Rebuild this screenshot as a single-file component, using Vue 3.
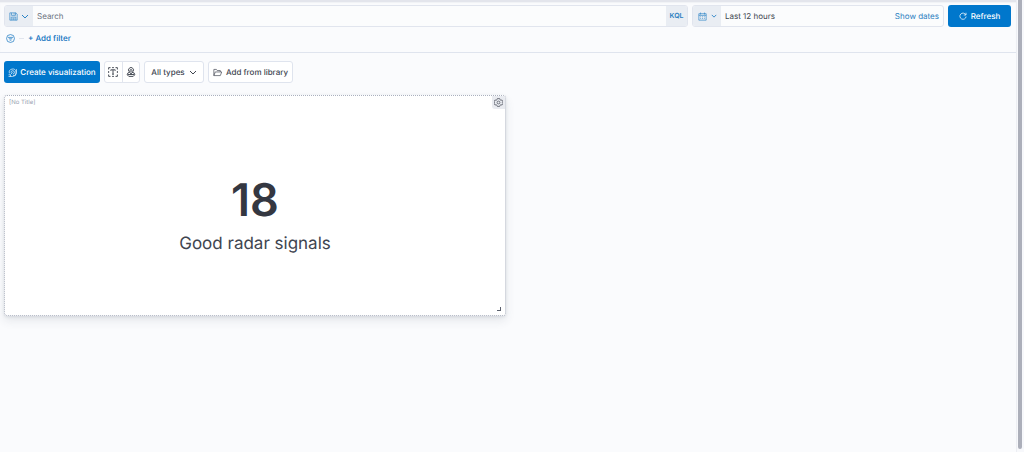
<script setup>
import { ref } from 'vue'

const query = ref('')
const metric = { value: 18, label: 'Good radar signals' }
</script>

<template>
  <div class="app">
    <div class="page">
      <header class="query-area">
        <form class="query-bar" @submit.prevent>
          <div class="group search-group">
            <button type="button" class="prepend" aria-label="Saved queries">
              <svg class="icon" viewBox="0 0 16 16"><path d="M1.5 1.5h10.8l2.2 2.2v10.800h-13zM4.500 1.500v4.500h7v-4.500M9 2v2.500M4 14.500v-5.500h8v5.500M6 11h4M6 13h4" /></svg>
              <svg class="chevron" viewBox="0 0 8 5"><path d="M1 1l3 3 3-3" /></svg>
            </button>
            <input v-model="query" class="search" type="text" placeholder="Search" aria-label="Search">
            <button type="button" class="kql">KQL</button>
          </div>
          <div class="group date-group">
            <button type="button" class="prepend" aria-label="Quick time ranges">
              <svg class="icon" viewBox="0 0 16 16"><path d="M1.500 3h13v11.500h-13zM1.500 6h13M4.500 1v3.500M11.500 1v3.500M4 8.500h1.500M7.300 8.500h1.500M10.500 8.500h1.500M4 11.500h1.500M7.300 11.500h1.500M10.500 11.500h1.500" /></svg>
              <svg class="chevron small" viewBox="0 0 8 5"><path d="M1 1l3 3 3-3" /></svg>
            </button>
            <button type="button" class="range">Last 12 hours</button>
            <button type="button" class="show-dates">Show dates</button>
          </div>
          <button type="submit" class="btn primary refresh">
            <svg class="icon-sm" viewBox="0 0 16 16"><path d="M13.500 5.500A6.200 6.200 0 1 0 14.200 9M14 1.500v4.500h-4.500" /></svg>
            Refresh
          </button>
        </form>
        <div class="filters">
          <button type="button" class="filter-menu" aria-label="Filter options">
            <svg class="icon" viewBox="0 0 16 16"><circle cx="8" cy="8" r="7" /><path d="M3.500 6h9M5 8.500h6M6.500 11h3" /></svg>
          </button>
          <span class="dash"></span>
          <button type="button" class="add-filter">+ Add filter</button>
        </div>
      </header>

      <main class="dashboard">
        <div class="toolbar">
          <button type="button" class="btn primary create">
            <svg class="icon" viewBox="0 0 16 16"><path d="M2.500 9.500A6 6 0 1 1 9 13.800M5.500 8.500A3 3 0 1 1 8.500 10.800M8.300 7.800L5 11M1 12h3.500v3M1 15h7A7 7 0 0 0 15 8V2" /></svg>
            Create visualization
          </button>
          <div class="icon-group">
            <button type="button" aria-label="Add text">
              <svg class="icon-lg" viewBox="0 0 16 16"><path d="M1 4V1h3M6.500 1h3M12 1h3v3M15 6.500v3M15 12v3h-3M9.500 15h-3M4 15H1v-3M1 9.500v-3M4.500 6V4.500h7V6M8 4.500v7M6.500 11.500h3" /></svg>
            </button>
            <button type="button" aria-label="Add control">
              <svg class="icon-lg" viewBox="0 0 16 16"><path d="M5 7.500A4 4 0 1 1 11 7.500M6.500 9V5.500a1.500 1.500 0 0 1 3 0V9M6.500 8L3 9.500l-1 3 2.500 2.500h7l2.500-2.500-1-3-3.500-1M3 12h10M6.500 10.500h3" /></svg>
            </button>
          </div>
          <button type="button" class="btn plain types">
            All types
            <svg class="chevron" viewBox="0 0 8 5"><path d="M1 1l3 3 3-3" /></svg>
          </button>
          <button type="button" class="btn plain library">
            <svg class="icon" viewBox="0 0 16 16"><path d="M1.500 13.500v-11h4.500l1.500 2h5.500v2.500M1.500 13.500L4 7h11.500l-2.500 6.500z" /></svg>
            Add from library
          </button>
        </div>

        <section class="panel">
          <div class="panel-head">
            <span class="panel-title">[No Title]</span>
            <button type="button" class="gear" aria-label="Panel options">
              <svg class="icon" viewBox="0 0 16 16"><path d="M6 1h4l.6 2 1.700 1 2-.5 1.600 3.200L14.500 8l1.400 1.400-1.600 3.100-2-.5-1.700 1L10 15H6l-.6-2-1.700-1-2 .5L.1 9.400 1.500 8 .1 6.700 1.700 3.500l2 .5 1.700-1z" /><circle cx="8" cy="8" r="2.500" /></svg>
            </button>
          </div>
          <div class="metric">
            <strong class="value">{{ metric.value }}</strong>
            <span class="label">{{ metric.label }}</span>
          </div>
          <span class="resize"></span>
        </section>
      </main>
    </div>
    <div class="scroll-track"><div class="thumb"></div></div>
  </div>
</template>

<style>
body {
  background: #fafbfd;
}
</style>

<style scoped>
.app {
  display: flex;
  min-height: 100vh;
  font: 500 8px/12px Inter, sans-serif;
  text-rendering: geometricPrecision;
  color: #404550;
  background: #fafbfd;
}
.app * {
  box-sizing: border-box;
}
button {
  display: flex;
  align-items: center;
  justify-content: center;
  margin: 0;
  padding: 0;
  border: 0;
  background: none;
  color: inherit;
  font: inherit;
  text-rendering: inherit;
  white-space: nowrap;
  cursor: pointer;
}
svg {
  flex: none;
  fill: none;
  stroke: currentColor;
}
.icon {
  width: 9px;
  height: 9px;
  stroke-width: 1.2;
}
.icon-lg {
  width: 10px;
  height: 10px;
  stroke-width: 1.5;
}
.icon-sm {
  width: 8px;
  height: 8px;
  stroke-width: 1.5;
}
.chevron {
  width: 8px;
  height: 5px;
  stroke-width: 1;
}
.chevron.small {
  width: 6px;
  height: 4px;
  stroke-width: 1.2;
}
.page {
  flex: 1;
  min-width: 0;
}
.query-area {
  padding: 3px 5px 8px 4px;
  border-top: 2px solid #e3e5ec;
  border-bottom: 1px solid #dfe4ee;
  box-shadow: inset 0 1px 1px #f0f2f6;
}
.query-bar {
  display: flex;
  gap: 4px;
}
.group {
  display: flex;
  height: 22px;
  border: 1px solid #e1e5ee;
  border-radius: 3px;
  background: #fbfcfd;
  overflow: hidden;
}
.search-group {
  flex: 1;
  min-width: 0;
}
.date-group {
  flex: 0 1 252px;
}
.prepend {
  flex: none;
  gap: 3px;
  width: 28px;
  background: #e9edf3;
  color: #2b83c6;
}
.date-group .prepend {
  gap: 4px;
}
.search {
  flex: 1;
  min-width: 0;
  padding: 0 4px;
  border: 0;
  outline: 0;
  background: transparent;
  color: #343741;
  font: 400 8px/12px Inter, sans-serif;
  text-rendering: inherit;
}
.search::placeholder {
  color: #6c727e;
  opacity: 1;
}
.kql {
  width: 21px;
  background: #e9edf3;
  color: #2b7fc1;
  font-size: 7px;
  font-weight: 600;
}
.range {
  flex: 1;
  justify-content: flex-start;
  padding-left: 4px;
  font-weight: 400;
}
.show-dates {
  padding-right: 4px;
  color: #2b7fc1;
  font-weight: 400;
}
.btn {
  height: 22px;
  border-radius: 3px;
}
.primary {
  background: #0077cc;
  color: #fff;
}
.refresh {
  gap: 4px;
  width: 63px;
}
.filters {
  display: flex;
  align-items: center;
  height: 12px;
  margin-top: 5px;
  padding-left: 2px;
  color: #0b6fbe;
}
.dash {
  width: 5px;
  height: 1px;
  margin: 0 4px;
  background: #e1e5ee;
}
.dashboard {
  padding: 8px 4px;
}
.toolbar {
  display: flex;
  gap: 4px;
}
.create {
  gap: 3px;
  width: 96px;
}
.icon-group {
  display: flex;
  height: 22px;
  width: 36px;
  border: 1px solid #e1e5ee;
  border-radius: 3px;
  background: #fff;
}
.icon-group button {
  flex: 1;
}
.icon-group button + button {
  border-left: 1px solid #e1e5ee;
}
.plain {
  border: 1px solid #dfe4ee;
  background: #fff;
}
.types {
  gap: 4px;
  width: 60px;
}
.library {
  gap: 4px;
  width: 85px;
}
.panel {
  position: relative;
  display: flex;
  flex-direction: column;
  width: 50%;
  min-width: 240px;
  max-width: 502px;
  margin-top: 12px;
  border: 1px dotted #abb1bf;
  border-radius: 3px;
  background: #fff;
  box-shadow: 0 1px 3px rgba(60, 70, 90, .12), 0 5px 10px rgba(60, 70, 90, .1);
}
.panel-head {
  display: flex;
  justify-content: space-between;
  align-items: flex-start;
}
.panel-title {
  padding-left: 4px;
  color: #989fb0;
  font-size: 6px;
  line-height: 14px;
  font-weight: 400;
}
.gear {
  width: 13px;
  height: 13px;
  border-radius: 0 2px 0 3px;
  background: #e9ebf0;
}
.metric {
  display: flex;
  flex-direction: column;
  align-items: center;
  padding: 62px 0 59px;
}
.value {
  color: #343741;
  font-size: 45px;
  font-weight: 600;
  line-height: 56px;
}
.label {
  font-size: 17px;
  font-weight: 400;
  line-height: 24px;
  margin-top: 4px;
}
.resize {
  position: absolute;
  right: 4px;
  bottom: 4px;
  width: 4px;
  height: 4px;
  border-right: 1px solid #5a606d;
  border-bottom: 1px solid #5a606d;
}
.scroll-track {
  flex: none;
  width: 8px;
  padding: 0 2px 3px 1px;
  border-left: 1px solid #eceef3;
  background: #f7f8fb;
}
.thumb {
  height: 100%;
  border-radius: 0 0 3px 3px;
  background: #acafba;
}
</style>
